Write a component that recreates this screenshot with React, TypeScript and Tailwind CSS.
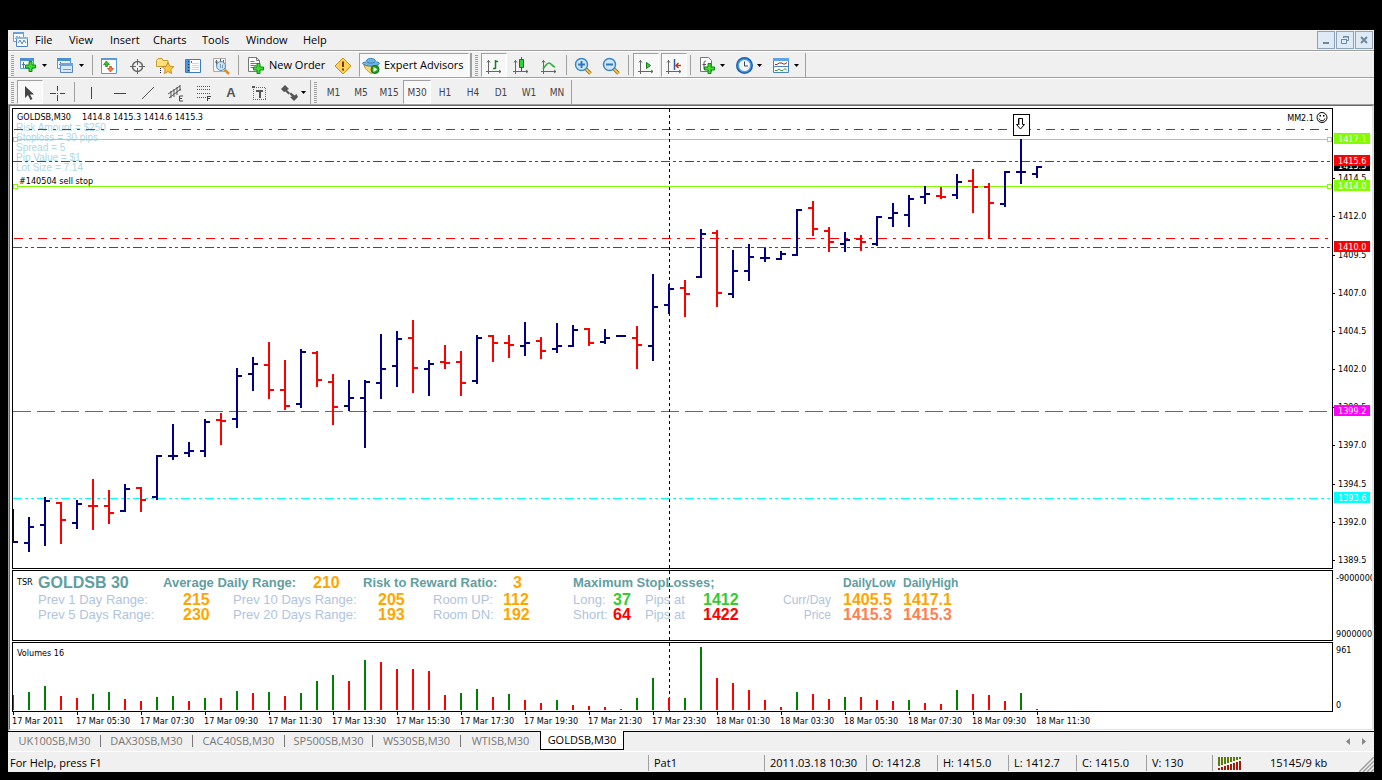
import React from 'react';

// x position of every bar is index * BAR_STEP, y values are measured from the window top
const BAR_STEP = 16;
const PRICE_TOP = 109;
const VOLUME_TOP = 643;
const VOLUME_BASE = 710;
const DAY_BREAK = 656;

type Dir = 'up' | 'down';

// [direction, high, low, open, close]
const bars: [Dir, number, number, number, number][] = [
  ['up', 509, 543, 542, 542],
  ['up', 517, 552, 543, 527],
  ['up', 497, 546, 525, 501],
  ['down', 502, 544, 503, 520],
  ['up', 500, 529, 523, 504],
  ['down', 479, 530, 506, 506],
  ['down', 490, 524, 506, 513],
  ['up', 484, 512, 511, 489],
  ['down', 487, 512, 488, 500],
  ['up', 455, 500, 497, 456],
  ['up', 424, 460, 456, 456],
  ['up', 442, 457, 453, 451],
  ['up', 419, 457, 451, 422],
  ['down', 413, 445, 420, 421],
  ['up', 368, 428, 419, 376],
  ['up', 357, 391, 374, 364],
  ['down', 342, 399, 365, 390],
  ['down', 360, 410, 390, 406],
  ['up', 349, 408, 404, 352],
  ['down', 351, 387, 353, 380],
  ['down', 374, 425, 382, 407],
  ['up', 380, 411, 406, 398],
  ['up', 380, 448, 398, 382],
  ['up', 334, 399, 383, 369],
  ['up', 331, 387, 366, 339],
  ['down', 320, 393, 338, 368],
  ['up', 360, 396, 369, 364],
  ['down', 345, 369, 362, 363],
  ['down', 351, 396, 362, 383],
  ['up', 335, 384, 381, 338],
  ['down', 335, 362, 336, 343],
  ['down', 335, 358, 343, 345],
  ['up', 322, 356, 346, 343],
  ['down', 337, 359, 341, 351],
  ['up', 323, 353, 349, 346],
  ['up', 325, 347, 346, 330],
  ['down', 328, 346, 329, 343],
  ['up', 329, 344, 342, 338],
  ['up', 335, 337, 336, 336],
  ['down', 326, 369, 338, 345],
  ['up', 274, 361, 346, 307],
  ['up', 284, 314, 305, 289],
  ['down', 280, 317, 288, 294],
  ['up', 229, 278, 277, 234],
  ['down', 230, 307, 233, 293],
  ['up', 250, 298, 294, 271],
  ['up', 244, 281, 271, 257],
  ['up', 248, 262, 258, 258],
  ['up', 251, 260, 259, 254],
  ['up', 209, 256, 255, 210],
  ['down', 201, 236, 208, 229],
  ['down', 227, 252, 231, 242],
  ['up', 232, 252, 244, 240],
  ['down', 235, 251, 239, 242],
  ['up', 216, 246, 244, 217],
  ['up', 203, 227, 218, 213],
  ['up', 195, 227, 215, 199],
  ['up', 186, 204, 197, 194],
  ['down', 187, 199, 196, 197],
  ['up', 174, 199, 195, 182],
  ['down', 169, 213, 181, 187],
  ['down', 183, 239, 187, 203],
  ['up', 171, 207, 204, 172],
  ['up', 139, 184, 172, 172],
  ['up', 166, 178, 174, 167],
];

// height of each volume column, negative when it fell against the previous one
const volumes = [
  -15, 18, 24, -14, -12, 16, 18, -11, -9, 13, 14, -9, 12, -12, 19, -17, 18, -14, 17, 29, 35, -29,
  50, -48, -41, -41, -39, -15, 17, 21, -13, 16, -10, -7, 10, -5, -4, -3, -1, 12, 32, -12, 12, 63,
  -32, -27, -20, -10, -3, 18, -16, -11, 13, -13, -10, -9, 10, -7, -6, 20, -16, -15, -9, 17, -1,
];

const levels = [
  { y: 129, color: '#ff0000', dash: '9 6 3 6', start: 1 },
  { y: 238, color: '#ff0000', dash: '9 6 3 6', start: 1 },
  { y: 161, color: '#ff0000', dash: '9 3 3 3 3 3', start: 0 },
  { y: 247, color: '#ff0000', dash: '9 3 3 3 3 3', start: 0 },
  { y: 411, color: '#ff00ff', dash: '18 6', start: 0 },
  { y: 498, color: '#00ffff', dash: '9 3 3 3 3 3', start: 0 },
];

const orderLines = [139, 186];

const priceTicks: [number, string][] = [
  [178, '1414.5'],
  [216, '1412.0'],
  [255, '1409.5'],
  [293, '1407.0'],
  [331, '1404.5'],
  [369, '1402.0'],
  [407, '1399.5'],
  [445, '1397.0'],
  [484, '1394.5'],
  [522, '1392.0'],
  [560, '1389.5'],
];

const priceTags: [number, string, string][] = [
  [133, '1417.1', '#7fff00'],
  [160, '1415.3', '#000000'],
  [155, '1415.6', '#ff0000'],
  [180, '1414.0', '#7fff00'],
  [241, '1410.0', '#ff0000'],
  [405, '1399.2', '#ff00ff'],
  [492, '1393.6', '#00ffff'],
];

const riskNotes = ['Risk Amount = $250', 'Stoploss = 30 pips', 'Spread = 5', 'Pip Value = $1', 'Lot Size = 7.14'];

const times = [
  '17 Mar 2011', '17 Mar 05:30', '17 Mar 07:30', '17 Mar 09:30', '17 Mar 11:30', '17 Mar 13:30',
  '17 Mar 15:30', '17 Mar 17:30', '17 Mar 19:30', '17 Mar 21:30', '17 Mar 23:30', '18 Mar 01:30',
  '18 Mar 03:30', '18 Mar 05:30', '18 Mar 07:30', '18 Mar 09:30', '18 Mar 11:30',
];

const menuItems = [
  { label: 'File', width: 'w-[34px]' },
  { label: 'View', width: 'w-[41px]' },
  { label: 'Insert', width: 'w-[43px]' },
  { label: 'Charts', width: 'w-[49px]' },
  { label: 'Tools', width: 'w-[44px]' },
  { label: 'Window', width: 'w-[57px]' },
  { label: 'Help', width: 'w-[40px]' },
];

const timeframes = ['M1', 'M5', 'M15', 'M30', 'H1', 'H4', 'D1', 'W1', 'MN'];

const tabs = [
  { label: 'UK100SB,M30', width: 'w-[92px]' },
  { label: 'DAX30SB,M30', width: 'w-[92px]' },
  { label: 'CAC40SB,M30', width: 'w-[92px]' },
  { label: 'SP500SB,M30', width: 'w-[88px]' },
  { label: 'WS30SB,M30', width: 'w-[88px]' },
  { label: 'WTISB,M30', width: 'w-[79px]' },
];

const statusCells = [
  { text: 'Pat1', width: 'w-[116px]' },
  { text: '2011.03.18 10:30', width: 'w-[102px]' },
  { text: 'O: 1412.8', width: 'w-[71px]' },
  { text: 'H: 1415.0', width: 'w-[71px]' },
  { text: 'L: 1412.7', width: 'w-[68px]' },
  { text: 'C: 1415.0', width: 'w-[70px]' },
  { text: 'V: 130', width: 'w-[66px]' },
];

/* ---------- icons ---------- */

function Icon({ children, crisp = false }: { children: React.ReactNode; crisp?: boolean }) {
  return (
    <svg width="18" height="18" viewBox="0 0 18 18" fill="none" className="shrink-0" shapeRendering={crisp ? 'crispEdges' : 'auto'} aria-hidden="true">
      {children}
    </svg>
  );
}

const Caret = () => (
  <svg width="5" height="3" viewBox="0 0 5 3" className="shrink-0" aria-hidden="true">
    <path d="M0 0h5L2.500 3z" fill="#000" />
  </svg>
);

const Plus = ({ x, y }: { x: number; y: number }) => (
  <path transform={`translate(${x} ${y})`} d="M4 .5h3V4h3.500v3H7v3.500H4V7H.5V4H4z" fill="#3fdc32" stroke="#0b8a0b" />
);

const NewChartIcon = () => (
  <Icon>
    <path d="M.5 1.500h13v10H.5z" fill="#fff" stroke="#5b9bd5" />
    <path d="M0 1h14v3H0z" fill="#4a8fd0" />
    <path d="M3.500 5v6M2 7.500h3M9 6.500h3" stroke="#56759b" />
    <Plus x={5} y={4} />
  </Icon>
);

const WindowsIcon = () => (
  <Icon>
    <path d="M.5 1.500h13v10H.5z" fill="#e8f2fc" stroke="#5b9bd5" />
    <path d="M0 1h14v3H0z" fill="#4a8fd0" />
    <path d="M3.500 5v5M2 7.500h3" stroke="#56759b" />
    <path d="M3.500 7.500h12v8h-12z" fill="#d7e8f8" stroke="#5b86b5" />
    <path d="M3 6h13v3H3z" fill="#6aa6dd" />
    <path d="M6 12.500h8" stroke="#7c99b8" />
  </Icon>
);

const MarketWatchIcon = () => (
  <Icon>
    <path d="M1.500 1.500h15v15h-15z" fill="#fff" stroke="#5b9bd5" />
    <path d="M1 1h16v2H1z" fill="#5b9bd5" />
    <path d="M6.500 4l3 3.500h-2v2h-2v-2h-2z" fill="#35c82e" stroke="#0c7d0c" strokeWidth=".7" />
    <path d="M10.500 15l-3-3.500h2v-2h2v2h2z" fill="#ff7a45" stroke="#c33b10" strokeWidth=".7" />
  </Icon>
);

const CrosshairIcon = () => (
  <Icon>
    <circle cx="9.500" cy="9.500" r="5" stroke="#666" strokeWidth="1.500" />
    <path d="M9.500 2v6M9.500 11v6M2 9.500h6M11 9.500h6" stroke="#666" />
  </Icon>
);

const FolderStarIcon = () => (
  <Icon>
    <path d="M.5 3.500l1.500-2h4l1 2h5v6H.5z" fill="#ffe183" stroke="#c99a2e" />
    <path d="M4.500 11v6" stroke="#222" strokeDasharray="1 1" />
    <path d="M12 5.500l1.800 3.700 4 .5-3 2.800.8 4-3.600-2-3.600 2 .8-4-3-2.800 4-.5z" fill="#ffc93c" stroke="#b57911" strokeWidth=".8" />
  </Icon>
);

const DataWindowIcon = () => (
  <Icon>
    <path d="M1.500 2.500h15v13h-15z" fill="#fff" stroke="#3a7cc4" />
    <path d="M2 3h4v12H2z" fill="#4c94dc" />
    <path d="M7.500 4v2" stroke="#e33" />
    <path d="M4.500 4v11" stroke="#123" strokeDasharray="1 2" />
    <path d="M8 6.500h7M8 8.500h7M8 10.500h7M8 12.500h7" stroke="#c4d8ee" />
  </Icon>
);

const TesterIcon = () => (
  <Icon>
    <path d="M1.500 1.500h12v13h-12z" fill="#f4f4f4" stroke="#aaa" />
    <path d="M4.500 3v5M8.500 2v4M11.500 3v5M3 5h3" stroke="#666" />
    <circle cx="9" cy="9" r="4.500" fill="#bfe0fb" fillOpacity=".85" stroke="#5b8fc0" />
    <path d="M8.500 7v4M10.500 8v3" stroke="#7f9db8" />
    <path d="M12.500 12.500l4.500 4.500" stroke="#d9922b" strokeWidth="2.500" />
  </Icon>
);

const NewOrderIcon = () => (
  <Icon>
    <path d="M1.500.5h8l3 3v11h-11z" fill="#fff" stroke="#777" />
    <path d="M9.500.5v3h3M3.500 4.500h4M3.500 6.500h7M3.500 8.500h6M3.500 10.500h3" stroke="#777" />
    <Plus x={6} y={6} />
  </Icon>
);

const AlertIcon = () => (
  <Icon>
    <path d="M9 1l8 8-8 8-8-8z" fill="#ffd257" stroke="#c98d15" />
    <path d="M9 4.500v5.500M9 11.500v2" stroke="#7a3b00" strokeWidth="2" />
  </Icon>
);

const ExpertIcon = () => (
  <Icon>
    <path d="M2 7.500c.5 4 3 6.500 7.500 9 4-2 6.500-5 6.500-9z" fill="#ffd66b" stroke="#c4902a" />
    <path d="M.5 6.500c0-1.500 3.500-1 4-2.500.5-3.500 8-3.500 9 0 .5 1.500 4 1 4 2.500-2 3.500-15 3.500-17 0z" fill="#6db3e8" stroke="#3a7cb4" />
    <path d="M5 5c3 1.500 5 1.500 8 0" stroke="#3a7cb4" />
    <circle cx="13" cy="12.500" r="4" fill="#22a522" stroke="#0b720b" />
    <path d="M11.500 10l4 2.500-4 2.500z" fill="#fff" />
  </Icon>
);

const Axes = () => <path d="M3.500 3v14M1 14.500h15M2 5.500l1.500-2 1.500 2M14 13l2 1.500-2 1.500" stroke="#666" />;

const BarChartIcon = () => (
  <Icon>
    <Axes />
    <path d="M10.500 3v9M8 11.500h2.500M10.500 4.500H13" stroke="#14801b" strokeWidth="1.500" />
  </Icon>
);

const CandleIcon = () => (
  <Icon>
    <Axes />
    <path d="M9.500 0v14" stroke="#14801b" />
    <path d="M7.500 2.500h4v8h-4z" fill="#35d13a" stroke="#0c7d0c" />
  </Icon>
);

const LineChartIcon = () => (
  <Icon>
    <Axes />
    <path d="M3 12c2-3 4-6 6-6s3 3 6 4" stroke="#2cae34" strokeWidth="1.500" />
  </Icon>
);

const ZoomIcon = ({ plus = false }: { plus?: boolean }) => (
  <Icon>
    <path d="M11.500 11.500l5 5" stroke="#a87514" strokeWidth="3.500" />
    <path d="M11.500 11.500l5 5" stroke="#ffcf4d" strokeWidth="1.500" />
    <circle cx="7.500" cy="7.500" r="6" fill="#cde8fb" stroke="#3f86c6" strokeWidth="1.500" />
    <path d={plus ? 'M4 7.500h7M7.500 4v7' : 'M4 7.500h7'} stroke="#3577b5" strokeWidth="2" />
  </Icon>
);

const AutoScrollIcon = () => (
  <Icon>
    <Axes />
    <path d="M9.500 5.500v6l4-3z" fill="#35d13a" stroke="#0c7d0c" />
  </Icon>
);

const ChartShiftIcon = () => (
  <Icon>
    <Axes />
    <path d="M9.500 2v11" stroke="#2a5ea8" strokeWidth="1.500" />
    <path d="M11 8.500h5M13.500 6l-2.500 2.500 2.500 2.500" stroke="#c33b10" strokeWidth="1.500" />
  </Icon>
);

const IndicatorsIcon = () => (
  <Icon>
    <path d="M1.500.5h8l3 3v11h-11z" fill="#fff" stroke="#777" />
    <path d="M7 4c-2 0-2 1-2 3v5M3.500 7.500H7" stroke="#555" />
    <Plus x={5} y={6} />
  </Icon>
);

const ClockIcon = () => (
  <Icon>
    <circle cx="8.500" cy="8.500" r="8.500" fill="#1d5fae" />
    <circle cx="8.500" cy="8.500" r="7" fill="#4a9ae6" />
    <circle cx="8.500" cy="8.500" r="5.500" fill="#f2f7fc" />
    <path d="M8.500 4.500V9H12" stroke="#444" />
  </Icon>
);

const TemplateIcon = () => (
  <Icon>
    <path d="M.5 1.500h15v14H.5z" fill="#fff" stroke="#4a84bf" />
    <path d="M0 1h16v3H0z" fill="#5ea4e4" />
    <path d="M1 9.500h14" stroke="#4a84bf" />
    <path d="M2 7.500h2l2-1.500h3l1 1h2l2-1.500" stroke="#9a2c18" />
    <path d="M2 13.500h2l2-1.500 2 1.500h2l2-2 2 2" stroke="#2c9a35" />
  </Icon>
);

const CursorIcon = () => (
  <Icon>
    <path d="M4 2v12l3-3 2.500 5 2-1L9 10.500h4z" fill="#444" />
  </Icon>
);

const CrossIcon = () => (
  <Icon crisp>
    <path d="M9.500 2v5M9.500 11v6M2 9.500h5.500M11.500 9.500H17M9 9.500h1" stroke="#444" />
  </Icon>
);

const VLineIcon = () => (
  <Icon crisp>
    <path d="M9.500 3v12" stroke="#444" />
  </Icon>
);

const HLineIcon = () => (
  <Icon crisp>
    <path d="M4 9.500h12" stroke="#444" />
  </Icon>
);

const TrendIcon = () => (
  <Icon>
    <path d="M4 15L16 3" stroke="#555" />
  </Icon>
);

const ChannelIcon = () => (
  <Icon>
    <path d="M2 10L14 2M3 14L15 5M5 7v7M8 5v8M11 3v8M14 1v6" stroke="#555" />
    <path d="M17 12h-3.500v5H17M13.500 14.500H16" stroke="#444" />
  </Icon>
);

const FiboIcon = () => (
  <Icon crisp>
    <path d="M3 2.500h14M3 5.500h14M3 9.500h14M3 13.500h9" stroke="#555" strokeDasharray="1 1" />
    <path d="M13.500 17v-5H17M13 14.500h3" stroke="#444" />
  </Icon>
);

const TextLabelIcon = () => (
  <Icon crisp>
    <path d="M3.500 3.500h12v12h-12z" stroke="#666" strokeDasharray="1 1" />
    <path d="M2 2h3v2H2zM6 6h7v2H6zM9 6h2v8H9z" fill="#555" />
  </Icon>
);

const ArrowsIcon = () => (
  <Icon>
    <path d="M0 5l4-4 4 4-2 1 3 3-1.500 1.500-3-3L3 8zM17 13l-4 4-4-4 2-.5L8.500 10 10 8.500l3.500 3 2-1.500z" fill="#555" />
  </Icon>
);

const AppIcon = () => (
  <Icon>
    <path d="M1.500 1.500h10v9h-10z" fill="#fff" stroke="#6a9fd8" />
    <path d="M1 1h11v2H1z" fill="#6a9fd8" />
    <path d="M3 8l2-3 1 2 2-2" stroke="#6a9fd8" />
    <path d="M4.500 6.500h11v9h-11z" fill="#fff" stroke="#4a84c4" />
    <path d="M6 12l2-3 2 4 2-4 2 3" stroke="#4a84c4" />
    <path d="M4 6h12v2H4z" fill="#8db8e6" />
  </Icon>
);

/* ---------- toolbar parts ---------- */

const Grip = () => (
  <div className="flex w-[9px] shrink-0 items-center pl-[3px]">
    <svg width="3" height="21" aria-hidden="true" shapeRendering="crispEdges">
      <path d="M1.500 0v21" stroke="#a0a0a0" strokeWidth="3" strokeDasharray="1 1" />
    </svg>
  </div>
);

const Separator = () => (
  <div className="flex w-1.5 shrink-0 justify-center py-0.5">
    <div className="w-px bg-[#a0a0a0]" />
  </div>
);

const BarEnd = () => <div className="w-0.5 shrink-0 bg-[#a0a0a0]" />;

interface ToolProps {
  label: string;
  className?: string;
  pressed?: boolean;
  children: React.ReactNode;
}

function Tool({ label, className = 'w-7 justify-center', pressed = false, children }: ToolProps) {
  return (
    <button
      type="button"
      aria-label={label}
      aria-pressed={pressed}
      className={`flex shrink-0 items-center border pt-px whitespace-nowrap ${
        pressed ? 'border-t-[#a0a0a0] border-l-[#a0a0a0] border-r-white border-b-white bg-[#f8f8f8]' : 'border-transparent'
      } ${className}`}
    >
      {children}
    </button>
  );
}

function MenuBar() {
  return (
    <div className="flex h-5 items-center">
      <div className="flex w-[27px] pl-1">
        <AppIcon />
      </div>
      <nav className="flex flex-1">
        {menuItems.map((item) => (
          <button key={item.label} type="button" className={`text-left ${item.width}`}>
            {item.label}
          </button>
        ))}
      </nav>
      <div className="flex gap-px pr-px">
        <WindowButton label="Minimize">
          <path d="M5 10h6v2H5z" fill="#71879b" />
        </WindowButton>
        <WindowButton label="Restore">
          <path d="M4.500 7.500h5v4h-5zM6.500 6v-1.500h5v4H10M4 7.500h6M6 5h6" stroke="#71879b" />
        </WindowButton>
        <WindowButton label="Close">
          <path d="M5 5l6 6M11 5l-6 6" stroke="#71879b" strokeWidth="2" />
        </WindowButton>
      </div>
    </div>
  );
}

function WindowButton({ label, children }: { label: string; children: React.ReactNode }) {
  return (
    <button type="button" aria-label={label} className="h-[18px] w-[18px] border border-[#8fa3b8] bg-[#deebf7]">
      <svg width="16" height="16" viewBox="0 0 16 16" fill="none" aria-hidden="true">
        {children}
      </svg>
    </button>
  );
}

function StandardBar() {
  return (
    <div className="flex h-[25px] pt-px">
      <Grip />
      <Tool label="New chart" className="w-9 gap-1 pl-0.5"><NewChartIcon /><Caret /></Tool>
      <Tool label="Profiles" className="w-9 gap-1 pl-[3px]"><WindowsIcon /><Caret /></Tool>
      <Separator />
      <Tool label="Market watch"><MarketWatchIcon /></Tool>
      <Tool label="Data window"><CrosshairIcon /></Tool>
      <Tool label="Navigator"><FolderStarIcon /></Tool>
      <Tool label="Terminal"><DataWindowIcon /></Tool>
      <Tool label="Strategy tester"><TesterIcon /></Tool>
      <Separator />
      <Tool label="New Order" className="w-[88px] gap-1 pl-[5px]"><NewOrderIcon />New Order</Tool>
      <Tool label="MetaEditor"><AlertIcon /></Tool>
      <Tool label="Expert Advisors" pressed className="ml-0.5 w-[110px] gap-1 pl-0.5"><ExpertIcon />Expert Advisors</Tool>
      <div className="w-px" />
      <BarEnd />
      <Grip />
      <Tool label="Bar chart" pressed className="w-[26px] justify-center"><BarChartIcon /></Tool>
      <Tool label="Candlesticks"><CandleIcon /></Tool>
      <Tool label="Line chart"><LineChartIcon /></Tool>
      <Separator />
      <Tool label="Zoom in"><ZoomIcon plus /></Tool>
      <Tool label="Zoom out"><ZoomIcon /></Tool>
      <Separator />
      <Tool label="Auto scroll" pressed className="ml-0.5 w-[26px] justify-center"><AutoScrollIcon /></Tool>
      <Tool label="Chart shift" pressed className="ml-0.5 w-[26px] justify-center"><ChartShiftIcon /></Tool>
      <Separator />
      <Tool label="Indicators" className="w-[37px] gap-[3px] pl-[5px]"><IndicatorsIcon /><Caret /></Tool>
      <Tool label="Periods" className="w-[37px] gap-[3px] pl-[5px]"><ClockIcon /><Caret /></Tool>
      <Tool label="Templates" className="w-[38px] gap-[3px] pl-[5px]"><TemplateIcon /><Caret /></Tool>
      <div className="w-px bg-[#a0a0a0]" />
    </div>
  );
}

function LineStudiesBar() {
  return (
    <div className="flex h-[25px] pt-px">
      <Grip />
      <Tool label="Cursor" pressed className="w-[26px] justify-center"><CursorIcon /></Tool>
      <Tool label="Crosshair"><CrossIcon /></Tool>
      <Separator />
      <Tool label="Vertical line"><VLineIcon /></Tool>
      <Tool label="Horizontal line"><HLineIcon /></Tool>
      <Tool label="Trendline"><TrendIcon /></Tool>
      <Tool label="Equidistant channel"><ChannelIcon /></Tool>
      <Tool label="Fibonacci"><FiboIcon /></Tool>
      <Tool label="Text" className="w-7 justify-center font-['Liberation_Sans',sans-serif] text-[13px] font-bold text-[#555]">A</Tool>
      <Tool label="Text label"><TextLabelIcon /></Tool>
      <Tool label="Arrows" className="w-[37px] gap-0.5 pl-[7px]"><ArrowsIcon /><Caret /></Tool>
      <div className="w-px bg-[#a0a0a0]" />
      <Grip />
      {timeframes.map((tf, i) => (
        <Tool
          key={tf}
          label={tf}
          pressed={tf === 'M30'}
          className={`justify-center font-['DejaVu_Sans_Condensed','DejaVu_Sans',sans-serif] text-[10px] text-[#444] ${i === 0 ? 'w-[27px]' : 'w-7'}`}
        >
          {tf}
        </Tool>
      ))}
      <div className="w-px bg-[#a0a0a0]" />
    </div>
  );
}

/* ---------- chart ---------- */

const DayBreak = ({ height }: { height: number }) => (
  <line x1={DAY_BREAK + 0.5} x2={DAY_BREAK + 0.5} y1="0" y2={height} stroke="#000" strokeDasharray="3 3" />
);

function PricePanel() {
  return (
    <div className="flex">
      <div className="min-w-0 flex-1 border border-black">
        <svg width="100%" height="459" className="block" aria-label="GOLDSB M30 price chart">
          <g transform={`translate(0 ${-PRICE_TOP})`}>
            <g fontSize="10" fill="#add8e6" className="font-['Liberation_Sans',sans-serif]">
              {riskNotes.map((note, i) => (
                <text key={note} x="3" y={131 + i * 10}>{note}</text>
              ))}
            </g>
            <g shapeRendering="crispEdges">
              {levels.map((l) => (
                <line key={l.y} x1={l.start} x2="100%" y1={l.y + 0.5} y2={l.y + 0.5} stroke={l.color} strokeDasharray={l.dash} />
              ))}
              {orderLines.map((y) => (
                <g key={y} stroke="#7fff00" fill="#fff">
                  <line x1="0" x2="100%" y1={y + 0.5} y2={y + 0.5} />
                  <rect x="0.5" y={y - 1.5} width="4" height="4" />
                  <svg x="100%" className="overflow-visible">
                    <rect x="-4.500" y={y - 1.5} width="4" height="4" />
                  </svg>
                </g>
              ))}
              <g transform={`translate(0 ${PRICE_TOP})`}>
                <DayBreak height={459} />
              </g>
              {bars.map(([dir, high, low, open, close], i) => {
                const x = i * BAR_STEP;
                return (
                  <path
                    key={i}
                    d={`M${x} ${high}V${low}M${x - 5} ${open}H${x}M${x} ${close}H${x + 5}`}
                    stroke={dir === 'up' ? '#000080' : '#ff0000'}
                    strokeWidth="2"
                  />
                );
              })}
            </g>
            <rect x="1000.500" y="114.500" width="16" height="21" fill="#fff" stroke="#000" shapeRendering="crispEdges" />
            <path d="M1005.500 118.500h4v6h2l-4 4.500-4-4.500h2z" fill="#fff" stroke="#000" />
            <path d="M1006.500 119v6" stroke="#7db4e6" />
            <g fontSize="9" fill="#000">
              <text x="4" y="120">GOLDSB,M30</text>
              <text x="69" y="120">1414.8 1415.3 1414.6 1415.3</text>
              <text x="6" y="184">#140504 sell stop</text>
              <svg x="100%" className="overflow-visible">
                <text x="-18" y="121" textAnchor="end">MM2.1</text>
                <circle cx="-10" cy="117.500" r="5" fill="none" stroke="#000" />
                <path d="M-13 118.500c1 3 5 3 6 0" fill="none" stroke="#000" />
                <path d="M-12.500 115h1.500v1.500h-1.500zM-9 115h1.500v1.500H-9z" />
              </svg>
            </g>
          </g>
        </svg>
      </div>
      <svg width="39" height="461" className="block shrink-0" fontSize="9" aria-label="Price scale">
        <g transform="translate(0 -108)">
          {priceTicks.map(([y, label]) => (
            <g key={label}>
              <path d={`M0 ${y + 0.5}h2`} stroke="#000" />
              <text x="5" y={y + 3}>{label}</text>
            </g>
          ))}
          {priceTags.map(([y, label, color]) => (
            <g key={label}>
              <rect x="1" y={y} width="36" height="11" fill={color} />
              <text x="5" y={y + 9} fill="#fff">{label}</text>
            </g>
          ))}
        </g>
      </svg>
    </div>
  );
}

function Cell({ w, className = '', children }: { w: string; className?: string; children?: React.ReactNode }) {
  return <span className={`shrink-0 ${w} ${className}`}>{children}</span>;
}

const HEAD = 'font-bold text-[13px] text-[#5f9ea0]';
const NOTE = 'text-[13px] text-[#b0c4de]';
const VALUE = 'font-bold text-base text-[#ffa500]';

function RangePanel() {
  return (
    <div className="flex">
      <div className="relative h-[71px] min-w-0 flex-1 overflow-hidden border border-black whitespace-nowrap">
        <svg width="100%" height="69" className="absolute inset-0" shapeRendering="crispEdges" aria-hidden="true">
          <DayBreak height={69} />
        </svg>
        <div className="relative flex flex-col pl-1 font-['Liberation_Sans',sans-serif]">
          <div className="flex h-[21px] items-center pt-0.5">
            <Cell w="w-[21px]" className="font-['DejaVu_Sans_Condensed','DejaVu_Sans',sans-serif] text-[9px]">TSR</Cell>
            <Cell w="w-[125px]" className="text-base font-bold text-[#5f9ea0]">GOLDSB 30</Cell>
            <Cell w="w-[150px]" className={HEAD}>Average Daily Range:</Cell>
            <Cell w="w-[50px]" className={VALUE}>210</Cell>
            <Cell w="w-[150px]" className={HEAD}>Risk to Reward Ratio:</Cell>
            <Cell w="w-[60px]" className={VALUE}>3</Cell>
            <Cell w="w-[270px]" className={HEAD}>Maximum StopLosses;</Cell>
            <Cell w="w-[60px]" className="text-xs font-bold text-[#5f9ea0]">DailyLow</Cell>
            <Cell w="w-[60px]" className="text-xs font-bold text-[#5f9ea0]">DailyHigh</Cell>
          </div>
          <div className="flex h-[15px] items-center pl-[21px]">
            <Cell w="w-[145px]" className={NOTE}>Prev 1 Day Range:</Cell>
            <Cell w="w-[50px]" className={VALUE}>215</Cell>
            <Cell w="w-[145px]" className={NOTE}>Prev 10 Days Range:</Cell>
            <Cell w="w-[55px]" className={VALUE}>205</Cell>
            <Cell w="w-[70px]" className={NOTE}>Room UP:</Cell>
            <Cell w="w-[70px]" className={VALUE}>112</Cell>
            <Cell w="w-[40px]" className={NOTE}>Long:</Cell>
            <Cell w="w-[32px]" className="text-base font-bold text-[#32cd32]">37</Cell>
            <Cell w="w-[58px]" className={NOTE}>Pips at</Cell>
            <Cell w="w-[80px]" className="text-base font-bold text-[#32cd32]">1412</Cell>
            <Cell w="w-[60px]" className="pr-3 text-right text-xs text-[#b0c4de]">Curr/Day</Cell>
            <Cell w="w-[60px]" className={VALUE}>1405.5</Cell>
            <Cell w="w-[60px]" className={VALUE}>1417.1</Cell>
          </div>
          <div className="flex h-[15px] items-center pl-[21px]">
            <Cell w="w-[145px]" className={NOTE}>Prev 5 Days Range:</Cell>
            <Cell w="w-[50px]" className={VALUE}>230</Cell>
            <Cell w="w-[145px]" className={NOTE}>Prev 20 Days Range:</Cell>
            <Cell w="w-[55px]" className={VALUE}>193</Cell>
            <Cell w="w-[70px]" className={NOTE}>Room DN:</Cell>
            <Cell w="w-[70px]" className={VALUE}>192</Cell>
            <Cell w="w-[40px]" className={NOTE}>Short:</Cell>
            <Cell w="w-[32px]" className="text-base font-bold text-[#ff0000]">64</Cell>
            <Cell w="w-[58px]" className={NOTE}>Pips at</Cell>
            <Cell w="w-[80px]" className="text-base font-bold text-[#ff0000]">1422</Cell>
            <Cell w="w-[60px]" className="pr-3 text-right text-xs text-[#b0c4de]">Price</Cell>
            <Cell w="w-[60px]" className="text-base font-bold text-[#ff7f50]">1415.3</Cell>
            <Cell w="w-[60px]" className="text-base font-bold text-[#ff7f50]">1415.3</Cell>
          </div>
        </div>
      </div>
      <div className="flex w-[39px] shrink-0 flex-col justify-between overflow-hidden pt-1 pb-0.5 pl-[3px] text-[9px] leading-[9px]">
        <span>-90000000</span>
        <span>90000000</span>
      </div>
    </div>
  );
}

function VolumePanel() {
  return (
    <div className="flex">
      <div className="min-w-0 flex-1 border border-black">
        <svg width="100%" height="68" className="block" fontSize="9" aria-label="Volumes">
          <text x="4" y="13">Volumes 16</text>
          <g shapeRendering="crispEdges">
            <DayBreak height={68} />
            {volumes.map((v, i) => (
              <rect
                key={i}
                x={i * BAR_STEP - 1}
                y={VOLUME_BASE - VOLUME_TOP - Math.abs(v)}
                width="2"
                height={Math.abs(v)}
                fill={v > 0 ? '#008000' : '#ff0000'}
              />
            ))}
          </g>
        </svg>
      </div>
      <div className="flex w-[39px] shrink-0 flex-col justify-between pt-1 pb-0.5 pl-[3px] text-[9px] leading-[9px]">
        <span>961</span>
        <span>0</span>
      </div>
    </div>
  );
}

function TimeAxis() {
  return (
    <div className="flex h-[17px] overflow-hidden">
      {times.map((t) => (
        <div key={t} className="w-16 shrink-0 whitespace-nowrap">
          <div className="ml-px h-[3px] w-px bg-black" />
          <div className="text-[9px] leading-3">{t}</div>
        </div>
      ))}
    </div>
  );
}

function ChartWindow() {
  return (
    <div className="border-t border-l border-[#a0a0a0]">
      <div className="border-t border-r-2 border-b border-l border-t-[#696969] border-r-[#e3e3e3] border-b-[#e3e3e3] border-l-[#696969] bg-white">
        <div className="flex flex-col gap-px pt-0.5 pl-0.5 font-['DejaVu_Sans_Condensed','DejaVu_Sans',sans-serif]">
          <PricePanel />
          <RangePanel />
          <div>
            <VolumePanel />
            <TimeAxis />
          </div>
        </div>
      </div>
      <div className="h-px bg-white" />
    </div>
  );
}

function ChartTabs() {
  return (
    <div className="flex h-5 border-t border-black text-[11px]">
      <div className="w-px" />
      {tabs.map((tab, i) => (
        <button key={tab.label} type="button" className={`flex items-center pb-0.5 text-[#777] ${tab.width}`}>
          <span className={`flex-1 leading-3 ${i < 5 ? 'border-r border-[#777]' : ''}`}>{tab.label}</span>
        </button>
      ))}
      <button type="button" className="-mt-px h-[19px] w-[84px] border-x border-b border-black bg-white leading-4">
        GOLDSB,M30
      </button>
      <div className="ml-auto flex items-center gap-3 pr-2">
        <button type="button" aria-label="Scroll tabs left">
          <svg width="4" height="7" className="block"><path d="M4 0v7L0 3.500z" fill="#888" /></svg>
        </button>
        <button type="button" aria-label="Scroll tabs right">
          <svg width="4" height="7" className="block"><path d="M0 0v7l4-3.500z" fill="#888" /></svg>
        </button>
      </div>
    </div>
  );
}

function StatusBar() {
  return (
    <div className="flex h-[21px] items-stretch border-t border-white pt-px">
      <div className="flex min-w-0 flex-1 items-center pt-px pl-0.5">For Help, press F1</div>
      {statusCells.map((cell) => (
        <div key={cell.text} className={`mt-0.5 mb-px flex shrink-0 items-center border-l border-[#a0a0a0] pl-[5px] whitespace-nowrap ${cell.width}`}>
          {cell.text}
        </div>
      ))}
      <div className="flex w-[162px] shrink-0 pt-0.5">
        <div className="mb-px flex flex-1 items-center border-l border-[#a0a0a0] pl-[5px]">
          <svg width="24" height="13" shapeRendering="crispEdges" aria-hidden="true">
            {[0, 1, 2, 3, 4, 5, 6, 7].map((i) => (
              <g key={i}>
                <rect x={i * 3} y="0" width="2" height={9 - i} fill="#5a7a0a" />
                <rect x={i * 3} y={11 - i} width="2" height={2 + i} fill="#9c1c0c" />
              </g>
            ))}
          </svg>
          <span className="pl-7">15145/9 kb</span>
        </div>
        <svg width="15" height="15" className="self-end" aria-hidden="true">
          <path d="M0 15L15 0M4 15L15 4M8 15l7-7M12 15l3-3" stroke="#a0a0a0" strokeWidth="1.500" />
        </svg>
      </div>
    </div>
  );
}

const Divider = () => <div className="h-0.5 border-t border-b border-t-[#a0a0a0] border-b-white" />;

export default function App() {
  return (
    <div className="min-h-screen bg-black px-2 pt-[30px] pb-2">
      <div className="overflow-hidden bg-[#f0f0f0] font-['Open_Sans','Noto_Sans',sans-serif] text-[11px] text-black">
        <MenuBar />
        <Divider />
        <StandardBar />
        <Divider />
        <LineStudiesBar />
        <ChartWindow />
        <ChartTabs />
        <StatusBar />
      </div>
    </div>
  );
}
